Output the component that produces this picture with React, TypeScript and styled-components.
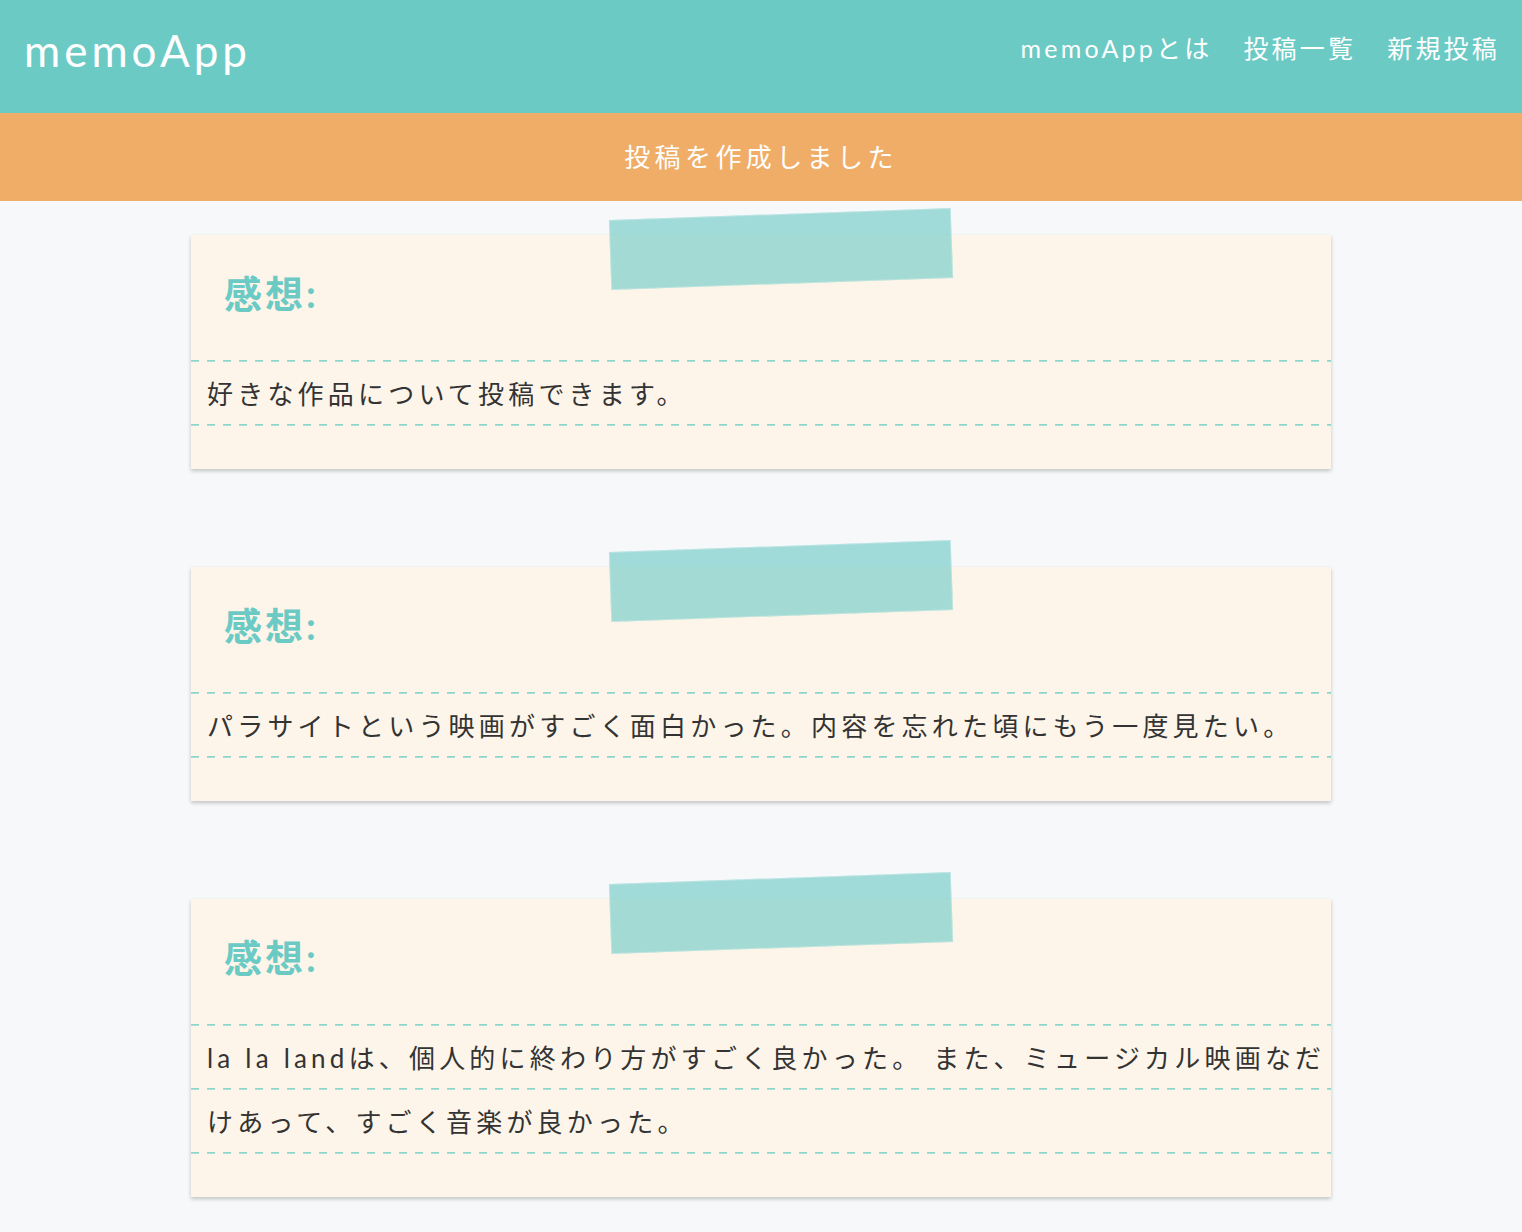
import React from "react";
import styled, { createGlobalStyle } from "styled-components";

const GlobalStyle = createGlobalStyle`
  html, body {
    margin: 0;
    padding: 0;
    background: #f7f8fa;
    font-family: Lato, "Noto Sans CJK JP", sans-serif;
    color: #333;
  }
  * { box-sizing: border-box; }
`;

const Header = styled.header`
  height: 113px;
  background: #6ccac5;
  display: flex;
  justify-content: space-between;
  align-items: flex-start;
  padding: 22px 22px 0 24px;
`;

const Logo = styled.a`
  color: #fff;
  font-size: 44px;
  letter-spacing: 4px;
  line-height: 56px;
  text-decoration: none;
`;

const Nav = styled.nav`
  display: flex;
  gap: 31px;
  padding-top: 6px;
`;

const NavLink = styled.a`
  color: #fff;
  font-size: 25px;
  letter-spacing: 3.2px;
  line-height: 40px;
  text-decoration: none;
`;

const Flash = styled.div`
  height: 88px;
  background: #f0ad67;
  color: #fff;
  font-size: 26px;
  letter-spacing: 4.4px;
  display: flex;
  align-items: center;
  justify-content: center;
  padding-bottom: 4px;
`;

const Main = styled.main`
  display: flex;
  flex-direction: column;
  align-items: center;
  gap: 98px;
  padding: 34px 0 36px;
`;

const Card = styled.article`
  position: relative;
  width: 1140px;
  background: #fdf5e9;
  box-shadow: 0 2px 4px rgba(0, 0, 0, 0.22);
  padding-bottom: 41px;
`;

const Tape = styled.div`
  position: absolute;
  left: 419px;
  top: -21px;
  width: 342px;
  height: 70px;
  background: rgba(108, 202, 197, 0.62);
  box-shadow: inset 0 0 0 1px rgba(255, 255, 255, 0.25);
  transform: rotate(-2deg);
`;

const Title = styled.h2`
  margin: 0;
  height: 125px;
  padding: 31px 32px 0 33px;
  font-size: 38px;
  line-height: 54px;
  font-weight: 700;
  letter-spacing: 3px;
  color: #6ccac5;
`;

const Body = styled.p`
  margin: 0;
  padding: 2px 2px 2px 16px;
  font-size: 26px;
  line-height: 64px;
  letter-spacing: 4.2px;
  color: #333;
  background-color: #fdf5e9;
  background-image:
    linear-gradient(to right, transparent 8px, #fdf5e9 8px),
    linear-gradient(to bottom, #8fd4ca 0, #8fd4ca 1px, #aadcd2 1px, #aadcd2 2px, transparent 2px);
  background-size: 16px 100%, 100% 64px;
  background-repeat: repeat-x, repeat-y;
`;

const posts = [
  "好きな作品について投稿できます。",
  "パラサイトという映画がすごく面白かった。内容を忘れた頃にもう一度見たい。",
  "la la landは、個人的に終わり方がすごく良かった。 また、ミュージカル映画なだけあって、すごく音楽が良かった。",
];

export default function App() {
  return (
    <>
      <GlobalStyle />
      <Header>
        <Logo href="#">memoApp</Logo>
        <Nav>
          <NavLink href="#">memoAppとは</NavLink>
          <NavLink href="#">投稿一覧</NavLink>
          <NavLink href="#">新規投稿</NavLink>
        </Nav>
      </Header>
      <Flash>投稿を作成しました</Flash>
      <Main>
        {posts.map((p, i) => (
          <Card key={i}>
            <Tape />
            <Title>感想:</Title>
            <Body>{p}</Body>
          </Card>
        ))}
      </Main>
    </>
  );
}
